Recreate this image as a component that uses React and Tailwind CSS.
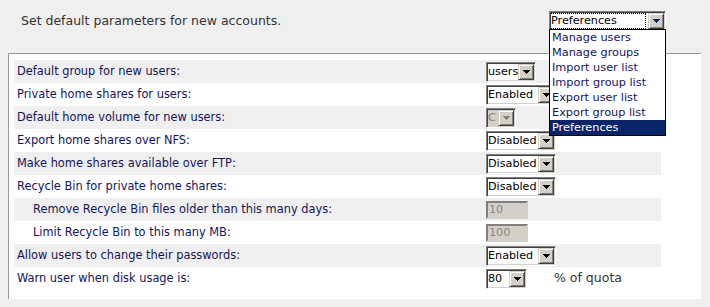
import React from "react";

function Arrow({ color = "#000" }) {
  return (
    <svg width="7" height="4" viewBox="0 0 7 4" shapeRendering="crispEdges">
      <rect x="0" y="0" width="7" height="1" fill={color} />
      <rect x="1" y="1" width="5" height="1" fill={color} />
      <rect x="2" y="2" width="3" height="1" fill={color} />
      <rect x="3" y="3" width="1" height="1" fill={color} />
    </svg>
  );
}

function Btn({ color }) {
  return (
    <div className="w-[16px] h-full shrink-0 bg-[#d4d0c8] border border-t-[#d4d0c8] border-l-[#d4d0c8] border-b-[#404040] border-r-[#404040] shadow-[inset_1px_1px_0_#ffffff,inset_-1px_-1px_0_#808080] flex items-center justify-center">
      <Arrow color={color} />
    </div>
  );
}

function Select({ text, className, disabled, focused }) {
  return (
    <div
      className={
        "flex h-[20px] border border-t-[#808080] border-l-[#808080] border-b-white border-r-white shadow-[inset_1px_1px_0_#404040,inset_-1px_-1px_0_#d4d0c8] p-[1px] " +
        (disabled ? "bg-[#d4d0c8] " : "bg-white ") +
        className
      }
    >
      <div
        className={
          "flex-1 flex items-center text-[11.2px] leading-none overflow-hidden whitespace-nowrap " +
          (disabled ? "text-[#808080]" : "text-black")
        }
      >
        {focused ? (
          <span className="outline-1 outline-dotted outline-black pr-[28px] h-[14px] flex items-center">{text}</span>
        ) : (
          text
        )}
      </div>
      <Btn color={disabled ? "#808080" : focused ? "#0a246a" : "#000"} />
    </div>
  );
}

function Input({ text }) {
  return (
    <div className="w-[42px] h-[18px] bg-[#d4d0c8] border-2 border-t-[#808080] border-l-[#808080] border-b-[#d4d0c8] border-r-[#d4d0c8] flex items-center pl-[1px] text-[11.2px] leading-none text-[#888888]">
      {text}
    </div>
  );
}

const rows = [
  { label: "Default group for new users:", ctl: <Select text="users" className="w-[50px]" /> },
  { label: "Private home shares for users:", ctl: <Select text="Enabled" className="w-[70px]" /> },
  { label: "Default home volume for new users:", ctl: <Select text="C" disabled className="w-[30px]" /> },
  { label: "Export home shares over NFS:", ctl: <Select text="Disabled" className="w-[70px]" /> },
  { label: "Make home shares available over FTP:", ctl: <Select text="Disabled" className="w-[70px]" /> },
  { label: "Recycle Bin for private home shares:", ctl: <Select text="Disabled" className="w-[70px]" /> },
  { label: "Remove Recycle Bin files older than this many days:", indent: true, ctl: <Input text="10" /> },
  { label: "Limit Recycle Bin to this many MB:", indent: true, ctl: <Input text="100" /> },
  { label: "Allow users to change their passwords:", ctl: <Select text="Enabled" className="w-[70px]" /> },
  {
    label: "Warn user when disk usage is:",
    ctl: (
      <div className="flex items-center">
        <Select text="80" className="w-[41px]" />
        <span className="ml-[27px] text-[12.5px] text-[#333333]">% of quota</span>
      </div>
    ),
  },
];

const menu = [
  "Manage users",
  "Manage groups",
  "Import user list",
  "Import group list",
  "Export user list",
  "Export group list",
  "Preferences",
];

export default function App() {
  return (
    <div className="relative w-[710px] h-[307px] bg-[#efefef] overflow-hidden font-['DejaVu_Sans',sans-serif]">
      <div className="flex items-start h-[53px] pt-[11px]">
        <div className="pl-[21px] pt-[2px] text-[12.5px] text-[#333333] leading-[16px]">
          Set default parameters for new accounts.
        </div>
        <div className="ml-auto mr-[44px]">
          <Select text="Preferences" focused className="w-[117px] h-[18px]" />
        </div>
      </div>

      <div className="ml-[8px] w-[693px] h-[246px] bg-white border-t border-l border-[#999999] pt-[6px] pl-[5px]">
        {rows.map((r, i) => (
          <div
            key={i}
            className={"flex items-center h-[23px] w-[647px] " + (i % 2 === 0 ? "bg-[#efefef]" : "bg-white")}
          >
            <div
              className={
                "w-[472px] text-[11.4px] text-[#14145a] whitespace-nowrap " + (r.indent ? "pl-[19px]" : "pl-[3px]")
              }
            >
              {r.label}
            </div>
            <div>{r.ctl}</div>
          </div>
        ))}
      </div>

      <div className="absolute left-[549px] top-[29px] w-[117px] bg-white border border-black">
        {menu.map((m, i) => (
          <div
            key={m}
            className={
              "h-[15px] flex items-center pl-[2px] text-[11.3px] leading-none whitespace-nowrap " +
              (i === menu.length - 1 ? "bg-[#0a246a] text-white" : "text-[#14145a]")
            }
          >
            {m}
          </div>
        ))}
      </div>
    </div>
  );
}
